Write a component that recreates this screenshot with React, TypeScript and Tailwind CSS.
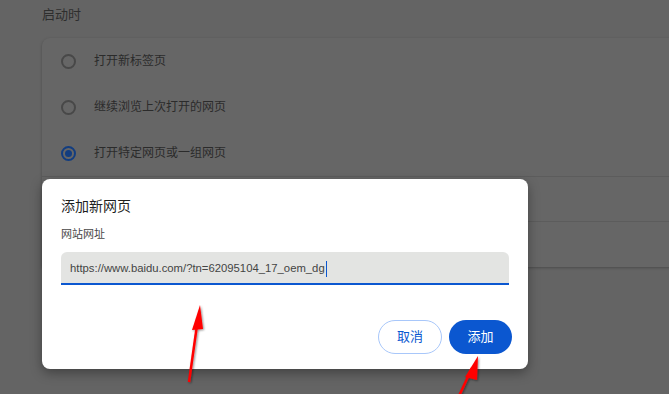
import React from 'react';

const font = { fontFamily: '"Noto Sans", "Noto Sans CJK SC", sans-serif' };

const options = [
  { label: '打开新标签页', checked: false },
  { label: '继续浏览上次打开的网页', checked: false },
  { label: '打开特定网页或一组网页', checked: true },
];

const Radio = ({ checked }: { checked: boolean }) =>
  checked ? (
    <div className="w-[15px] h-[15px] rounded-full border-2 border-[#123d80] flex items-center justify-center">
      <div className="w-[7px] h-[7px] rounded-full bg-[#123d80]" />
    </div>
  ) : (
    <div className="w-[15px] h-[15px] rounded-full border-2 border-[#484848]" />
  );

export default function App() {
  return (
    <div
      className="relative w-[669px] h-[394px] overflow-hidden bg-[#646464]"
      style={font}
    >
      {/* settings page behind the scrim */}
      <div className="pl-[42px] pt-[5px]">
        <div className="text-[13px] leading-[18px] text-[#2e2e2e]">启动时</div>
        <div className="mt-[15px] w-[700px] rounded-tl-[8px] bg-[#666666] shadow-[0_1px_3px_rgba(0,0,0,0.25)]">
          {options.map(o => (
            <div key={o.label} className="h-[46px] flex items-center pl-[19px]">
              <Radio checked={o.checked} />
              <span className="ml-[18px] text-[12px] text-[#2b2b2b]">{o.label}</span>
            </div>
          ))}
          <div className="h-[45px] border-t border-[#5c5c5c]" />
          <div className="h-[46px] border-t border-[#5c5c5c]" />
        </div>
      </div>

      {/* dialog */}
      <div className="absolute left-[42px] top-[179px] w-[486px] h-[190px] bg-white rounded-[8px] shadow-[0_4px_12px_rgba(0,0,0,0.35)] px-[19px] pt-[17px]">
        <div className="text-[14px] leading-[20px] text-[#1f1f1f]">添加新网页</div>
        <div className="mt-[11px] text-[11px] leading-[14px] text-[#474747]">网站网址</div>
        <div className="mt-[11px] h-[33px] bg-[#e3e4e2] rounded-t-[6px] border-b-2 border-[#0b57d0] flex items-center pl-[9px] pt-[2px]">
          <span
            className="text-[11.3px] text-[#444444]"
            style={{ fontFamily: '"Liberation Sans", Arial, sans-serif' }}
          >
            https://www.baidu.com/?tn=62095104_17_oem_dg
          </span>
          <span className="w-px h-[16px] bg-[#0b57d0] ml-px" />
        </div>
        <div className="absolute right-[16px] bottom-[15px] flex gap-[7px]">
          <button className="w-[64px] h-[34px] rounded-full border border-[#a8c7fa] text-[13px] text-[#0b57d0] bg-white">
            取消
          </button>
          <button className="w-[63px] h-[34px] rounded-full bg-[#0b57d0] text-[13px] text-white">
            添加
          </button>
        </div>
      </div>

      {/* annotation arrows */}
      <svg className="absolute inset-0 pointer-events-none" width="669" height="394">
        <defs>
          <filter id="sh" x="-50%" y="-50%" width="200%" height="200%">
            <feDropShadow dx="1" dy="1" stdDeviation="1.2" floodColor="#000" floodOpacity="0.45" />
          </filter>
        </defs>
        <g filter="url(#sh)" fill="#ff0000" stroke="#ff0000">
          <line x1="189" y1="382" x2="198" y2="318" strokeWidth="2.5" />
          <polygon points="200,305 192,330 203,329" stroke="none" />
          <line x1="459" y1="396" x2="472" y2="368" strokeWidth="2.5" />
          <polygon points="478,356 465,377 477,380" stroke="none" />
        </g>
      </svg>
    </div>
  );
}
